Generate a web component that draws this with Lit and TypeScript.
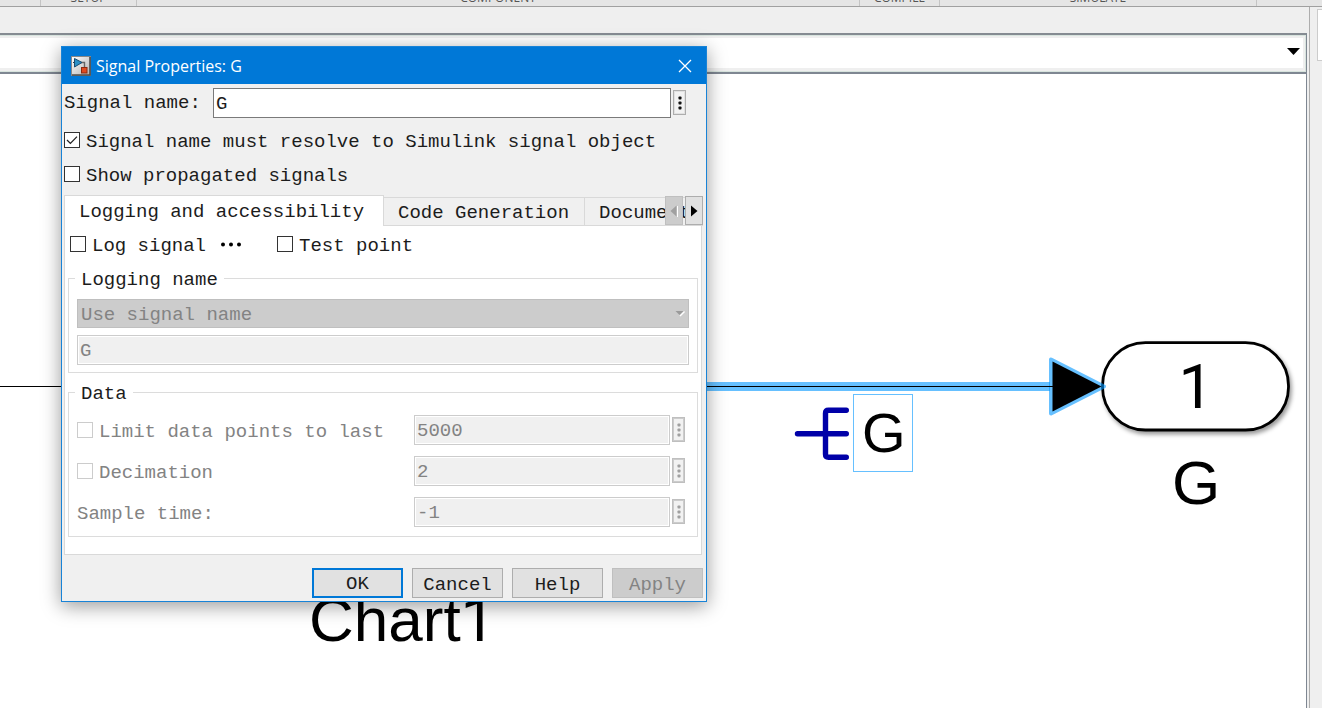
import { LitElement, html, svg, css } from "lit";
import { customElement, property, state } from "lit/decorators.js";

@customElement("more-button")
class MoreButton extends LitElement {
  @property({ type: Boolean }) disabled = false;
  @property() label = "";

  static styles = css`
    :host { display: block; width: 13px; height: 25px; }
    .more {
      display: block; box-sizing: border-box; width: 100%; height: 100%; padding: 0;
      border: 1px solid #adadad; background: #e1e1e1; color: #111;
    }
    .more:disabled { border-color: #bfbfbf; background: #ccc; color: #a0a0a0; }
    .dots { display: block; width: 11px; height: 23px; }
  `;

  render() {
    return html`<button class="more" type="button" aria-label=${this.label} ?disabled=${this.disabled}>
      <svg class="dots" viewBox="0 0 11 23">
        <rect x="1" y="1" width="9" height="21" fill="#f2f2f2" />
        <g fill="currentColor">
          <rect x="4.5" y="5.5" width="3" height="3" rx="0.8" />
          <rect x="4.5" y="10.5" width="3" height="3" rx="0.8" />
          <rect x="4.5" y="15.5" width="3" height="3" rx="0.8" />
        </g>
      </svg>
    </button>`;
  }
}

@customElement("signal-dialog")
class SignalDialog extends LitElement {
  @state() private tab = 0;

  static styles = css`
    :host { display: block; }
    .window {
      box-sizing: border-box; border: 1px solid #1883d7; background: #f0f0f0;
      box-shadow: 0 4px 18px rgba(0, 0, 0, 0.4);
      font: 19px/24px "Liberation Mono", monospace; color: #1c1c1c;
    }
    .titlebar {
      display: flex; align-items: center; gap: 5px; height: 37px; padding: 0 9px;
      background: #0078d7; color: #fff;
      font: 16px/20px "Open Sans", "Noto Sans", sans-serif;
    }
    .appicon { width: 20px; height: 20px; flex: none; }
    .title { flex: 1; margin: 0; font-size: inherit; font-weight: normal; white-space: nowrap; }
    .close { width: 24px; height: 24px; padding: 0; border: 0; background: none; color: #fff; }
    .close svg { display: block; margin: auto; }
    .body { padding: 4px 3px 3px 2px; }
    .namerow { display: flex; align-items: center; gap: 2px; padding-right: 17px; }
    .namerow label { width: 147px; flex: none; }
    more-button { align-self: start; margin-top: 2px; }
    .text {
      box-sizing: border-box; flex: 1; min-width: 0; height: 30px; padding: 2px 2px 0;
      border: 1px solid #7a7a7a; border-radius: 0; background: #fff; color: inherit; font: inherit;
    }
    .text:disabled {
      border-color: #ccc; background: #f0f0f0; color: #838383; box-shadow: inset 0 0 0 1px #fff;
    }
    .wide { width: 100%; display: block; flex: none; }
    .check { display: flex; align-items: center; gap: 6px; height: 34px; white-space: nowrap; }
    .check input {
      appearance: none; box-sizing: border-box; flex: none; width: 16px; height: 16px; margin: 0;
      border: 1px solid #333; background: #fff;
    }
    .check input:checked {
      background: #fff url("data:image/svg+xml,%3Csvg xmlns='http://www.w3.org/2000/svg' viewBox='0 0 14 14'%3E%3Cpath d='M2 7l3.4 3.4L12 3.6' fill='none' stroke='%23222' stroke-width='1.3'/%3E%3C/svg%3E") center / 14px 14px;
    }
    .check input:disabled { border-color: #ccc; }
    .check span { padding-top: 3px; }
    .off { color: #838383; }
    .resolve { padding-top: 5px; }
    .tabbar { position: relative; display: flex; align-items: flex-end; height: 31px; margin-top: 4px; }
    .tabs { display: flex; align-items: flex-end; width: 100%; height: 31px; overflow: hidden; }
    .tab {
      box-sizing: border-box; flex: none; height: 29px; padding: 2px 15px 0 14px; margin: 0;
      border: 1px solid #d9d9d9; border-left: 0; border-radius: 0;
      background: #f0f0f0; color: inherit; font: inherit; white-space: nowrap;
    }
    .tab.on {
      height: 31px; padding: 2px 19px 0 14px; border-left: 1px solid #d9d9d9; border-bottom: 0; background: #fff;
    }
    .scroll { position: absolute; top: 1px; right: 0; display: flex; gap: 2px; }
    .scroll button {
      box-sizing: border-box; width: 18px; height: 29px; padding: 0;
      border: 1px solid #adadad; background: #e1e1e1; color: #000;
    }
    .scroll button:disabled { border-color: #bfbfbf; background: #ccc; color: #a0a0a0; }
    .scroll svg { display: block; margin: auto; }
    .pane {
      margin-right: 1px; padding: 1px 3px 17px; background: #fff;
      border: 1px solid #d9d9d9; border-top: 0;
    }
    .logrow { display: flex; align-items: center; padding-left: 2px; height: 34px; }
    .logmore {
      display: flex; align-items: center; width: 22px; height: 20px; padding: 0;
      margin: 0 35px 0 14px; border: 0; background: none;
    }
    fieldset { min-width: 0; margin: 4px 0 0; padding: 7px 8px; border: 1px solid #dcdcdc; }
    legend { padding: 3px 6px 0; height: 24px; margin-left: -2px; }
    .group { display: flex; flex-direction: column; gap: 7px; }
    .data { margin-top: 6px; padding: 9px 12px 9px 8px; }
    .picker { position: relative; }
    .picker select {
      appearance: none; display: block; box-sizing: border-box; width: 100%; height: 29px; padding: 2px 3px 0;
      border: 1px solid #bfbfbf; border-radius: 0; background: #ccc; color: #838383; font: inherit; opacity: 1;
    }
    .picker svg { position: absolute; right: 4px; top: 11px; }
    .datarows { display: grid; gap: 11px; }
    .datarow { display: grid; grid-template-columns: 335px 1fr 13px; column-gap: 2px; align-items: center; }
    .datarow .check { height: 30px; }
    .actions { display: flex; justify-content: flex-end; gap: 9px; padding-top: 13px; }
    .action {
      box-sizing: border-box; width: 91px; height: 30px; padding: 3px 0 0;
      border: 1px solid #adadad; background: #e1e1e1; color: inherit; font: inherit; line-height: 24px;
    }
    .action.main { padding-top: 2px; border: 2px solid #0078d7; }
    .action:disabled { border-color: #bfbfbf; background: #ccc; color: #838383; }
  `;

  private tabs = ["Logging and accessibility", "Code Generation", "Documentation"];

  private dataRow(id: string, text: string, value: string, box: boolean) {
    return html`<div class="datarow off">
      ${box
        ? html`<label class="check"><input type="checkbox" disabled /><span>${text}</span></label>`
        : html`<label class="check" for=${id}><span>${text}</span></label>`}
      <input class="text" id=${id} .value=${value} aria-label=${text} disabled />
      <more-button label="More options" disabled></more-button>
    </div>`;
  }

  render() {
    return html`<section class="window" role="dialog" aria-label="Signal Properties: G">
      <header class="titlebar">
        <svg class="appicon" viewBox="0 0 20 20">
          <defs><linearGradient id="plate" x1="0" y1="0" x2="1" y2="1">
            <stop offset="0" stop-color="#fff" /><stop offset="1" stop-color="#b0b0b0" />
          </linearGradient></defs>
          <rect x="0.5" y="0.5" width="19" height="19" fill="url(#plate)" stroke="#888" />
          <path d="M1 19H19V1" fill="none" stroke="#4d4d4d" stroke-width="1.6" />
          <path d="M9 6.5H13.5V11" fill="none" stroke="#666" stroke-width="1.4" />
          <path d="M2 6.5H4" stroke="#234" />
          <path d="M3.5 2.5L11 6.5L3.5 11Z" fill="#2b8fc4" stroke="#174c73" stroke-width="1" />
          <rect x="10.5" y="11.5" width="5.5" height="5.5" fill="#e04a20" stroke="#8c2a10" />
        </svg>
        <h1 class="title">Signal Properties: G</h1>
        <button class="close" type="button" aria-label="Close">
          <svg width="14" height="14" viewBox="0 0 14 14"><path d="M1 1L13 13M13 1L1 13" stroke="currentColor" stroke-width="1.3" /></svg>
        </button>
      </header>
      <div class="body">
        <div class="namerow">
          <label for="name">Signal name:</label>
          <input class="text" id="name" value="G" />
          <more-button label="More options"></more-button>
        </div>
        <label class="check resolve"><input type="checkbox" checked /><span>Signal name must resolve to Simulink signal object</span></label>
        <label class="check"><input type="checkbox" /><span>Show propagated signals</span></label>
        <div class="tabbar">
          <div class="tabs" role="tablist">
            ${this.tabs.map((name, i) => html`<button type="button" role="tab" aria-selected=${i === this.tab}
              class="tab ${i === this.tab ? "on" : ""}" @click=${() => (this.tab = i)}>${name}</button>`)}
          </div>
          <div class="scroll">
            <button type="button" aria-label="Previous tabs" disabled>
              <svg width="8" height="12" viewBox="0 0 8 12"><path d="M7.5 1V12" stroke="#fff" /><path d="M6.5 0.5V11.5L0.5 6Z" fill="currentColor" /></svg>
            </button>
            <button type="button" aria-label="Next tabs">
              <svg width="8" height="12" viewBox="0 0 8 12"><path d="M1 0.5V11.5L7.5 6Z" fill="currentColor" /></svg>
            </button>
          </div>
        </div>
        <div class="pane" role="tabpanel">
          <div class="logrow">
            <label class="check"><input type="checkbox" /><span>Log signal</span></label>
            <button class="logmore" type="button" aria-label="Logging options">
              <svg width="22" height="5" viewBox="0 0 22 5"><circle cx="3" cy="2.5" r="2" /><circle cx="11" cy="2.5" r="2" /><circle cx="19" cy="2.5" r="2" /></svg>
            </button>
            <label class="check"><input type="checkbox" /><span>Test point</span></label>
          </div>
          <fieldset>
            <legend>Logging name</legend>
            <div class="group">
              <div class="picker">
                <select aria-label="Logging name mode" disabled><option>Use signal name</option></select>
                <svg width="10" height="7" viewBox="0 0 10 7"><path d="M5 6L9.5 1.5" stroke="#fff" stroke-width="1.5" /><path d="M0.5 1H8.5L4.5 5Z" fill="#9a9a9a" /></svg>
              </div>
              <input class="text wide" aria-label="Logging name" value="G" disabled />
            </div>
          </fieldset>
          <fieldset class="data">
            <legend>Data</legend>
            <div class="datarows">
              ${this.dataRow("limit", "Limit data points to last", "5000", true)}
              ${this.dataRow("decimation", "Decimation", "2", true)}
              ${this.dataRow("sample", "Sample time:", "-1", false)}
            </div>
          </fieldset>
        </div>
        <div class="actions">
          <button class="action main" type="button">OK</button>
          <button class="action" type="button">Cancel</button>
          <button class="action" type="button">Help</button>
          <button class="action" type="button" disabled>Apply</button>
        </div>
      </div>
    </section>`;
  }
}

@customElement("app-root")
class AppRoot extends LitElement {
  static styles = css`
    :host {
      display: flex; flex-direction: column; position: relative; height: 100vh; overflow: hidden;
      background: #efefef; font-family: "Open Sans", sans-serif;
    }
    .ribbon {
      box-sizing: border-box; flex: none; height: 7px; overflow: hidden; display: grid;
      grid-template-columns: 41px 96px 723px 80px 1fr 65px; align-content: end;
      background: #e5e5e5; border-bottom: 1px solid #a0a0a0;
    }
    .group {
      box-sizing: border-box; height: 14px; padding-bottom: 2px; border-right: 1px solid #c4c4c4;
      font-size: 12px; line-height: 12px; text-align: center; color: #555;
    }
    .group:last-child { border: 0; }
    .work { flex: 1; min-height: 0; display: flex; }
    .editor { flex: 1; min-width: 0; display: flex; flex-direction: column; padding: 26px 2px 0 0; border-right: 1px solid #adadad; }
    .path {
      position: relative; flex: none; height: 41px; box-sizing: border-box;
      border: solid #7f8792; border-width: 2px 1px 2px 0; border-top-color: #858b92; background: #efefef;
      box-shadow: inset -1px 1px 0 #d8e4de, inset 0 -1px 0 #d8e4de;
    }
    .path select {
      appearance: none; position: relative; display: block; box-sizing: border-box;
      width: calc(100% - 3px); height: 30px; margin-top: 3px; border: 0; border-radius: 0; background: #fff;
    }
    .path svg { position: absolute; right: 6px; top: 13px; pointer-events: none; }
    .canvas { flex: 1; min-height: 0; background: #fff; border-right: 1px solid #7f8792; }
    .canvas svg { display: block; width: 100%; height: 100%; font-family: "Liberation Sans", Arial, sans-serif; }
    .num { font-family: Roboto, sans-serif; }
    .rail { flex: none; width: 12px; overflow: hidden; padding-top: 2px; }
    .card { box-sizing: border-box; height: 52px; width: 40px; margin-left: 7px; background: #fff; border: 1px solid #ccc; }
    .dialog { position: absolute; left: 61px; top: 46px; width: 646px; }
  `;

  private diagram() {
    return svg`<g transform="translate(0 -74)">
      <defs><filter id="drop" x="-10%" y="-10%" width="125%" height="130%">
        <feDropShadow dx="2" dy="3" stdDeviation="2" flood-color="#000" flood-opacity="0.4" />
      </filter></defs>
      <rect x="0" y="386" width="400" height="1" fill="#000" />
      <text x="309" y="641" font-size="62">Chart<tspan class="num">1</tspan></text>
      <rect x="1102.5" y="342.7" width="186" height="87.3" rx="43" fill="#fff" stroke="#000" stroke-width="2.8" filter="url(#drop)" />
      <text class="num" x="1196" y="408" font-size="62" text-anchor="middle">1</text>
      <text x="1196" y="504" font-size="62" text-anchor="middle">G</text>
      <rect x="640" y="382" width="410" height="9" fill="#66c0ff" />
      <path d="M1051 359.5V413.5L1104 386.5Z" fill="none" stroke="#0096ff" stroke-opacity="0.6" stroke-width="4" stroke-linejoin="round" />
      <path d="M1052.5 361.5V411.5L1101.5 386.5Z" fill="#000" />
      <rect x="640" y="386" width="413" height="1" fill="#000" />
      <path d="M797.5 433.7H846.3M846.3 410.2H828.5Q825.5 410.2 825.5 413.2V454.3Q825.5 457.3 828.5 457.3H846.3" fill="none" stroke="#0000a8" stroke-width="5.4" stroke-linecap="round" />
      <rect x="853.5" y="394.5" width="59" height="77" fill="#fff" stroke="#66c0ff" />
      <text x="862" y="452" font-size="56">G</text>
    </g>`;
  }

  render() {
    return html`
      <header class="ribbon">
        ${["", "SETUP", "COMPONENT", "COMPILE", "SIMULATE", ""].map((t) => html`<div class="group">${t}</div>`)}
      </header>
      <div class="work">
        <main class="editor">
          <div class="path">
            <select aria-label="Model path"><option></option></select>
            <svg width="13" height="7" viewBox="0 0 13 7"><path d="M0 0H13L6.5 7Z" /></svg>
          </div>
          <div class="canvas"><svg role="img" aria-label="Block diagram">${this.diagram()}</svg></div>
        </main>
        <aside class="rail"><div class="card"></div></aside>
      </div>
      <signal-dialog class="dialog"></signal-dialog>
    `;
  }
}
